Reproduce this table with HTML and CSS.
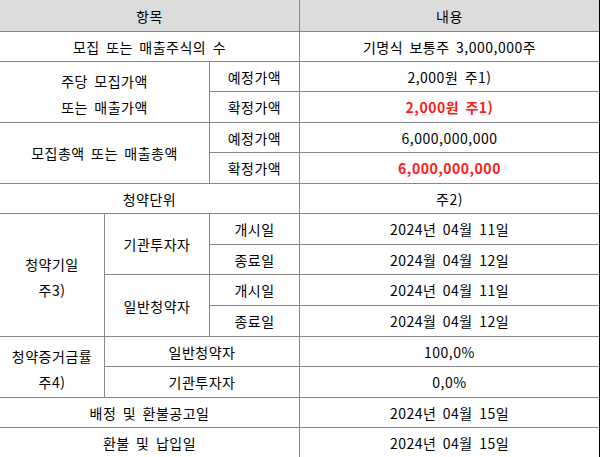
FILE: index.html
```html
<!DOCTYPE html>
<html lang="ko">
<head>
<meta charset="utf-8">
<link rel="stylesheet" href="styles.css">
</head>
<body>
<div class="sheet">
  <div class="c head s13">항목</div>
  <div class="c head">내용</div>

  <div class="c s13">모집 또는 매출주식의 수</div>
  <div class="c">기명식 보통주 3,000,000주</div>

  <div class="c s12 r2 multi">주당 모집가액<br>또는 매출가액</div>
  <div class="c">예정가액</div>
  <div class="c">2,000원 주1)</div>
  <div class="c">확정가액</div>
  <div class="c red">2,000원 주1)</div>

  <div class="c s12 r2">모집총액 또는 매출총액</div>
  <div class="c">예정가액</div>
  <div class="c">6,000,000,000</div>
  <div class="c">확정가액</div>
  <div class="c red">6,000,000,000</div>

  <div class="c s13">청약단위</div>
  <div class="c">주2)</div>

  <div class="c r4 multi">청약기일<br>주3)</div>
  <div class="c r2">기관투자자</div>
  <div class="c">개시일</div>
  <div class="c">2024년 04월 11일</div>
  <div class="c">종료일</div>
  <div class="c">2024월 04월 12일</div>
  <div class="c r2">일반청약자</div>
  <div class="c">개시일</div>
  <div class="c">2024년 04월 11일</div>
  <div class="c">종료일</div>
  <div class="c">2024월 04월 12일</div>

  <div class="c r2 multi">청약증거금률<br>주4)</div>
  <div class="c s23">일반청약자</div>
  <div class="c">100,0%</div>
  <div class="c s23">기관투자자</div>
  <div class="c">0,0%</div>

  <div class="c s13">배정 및 환불공고일</div>
  <div class="c">2024년 04월 15일</div>

  <div class="c s13">환불 및 납입일</div>
  <div class="c">2024년 04월 15일</div>
</div>
</body>
</html>
```

FILE: styles.css
```css
html, body {
  margin: 0;
  padding: 0;
  background: #fff;
}

.sheet {
  width: 599px;
  border-right: 1px solid #000;
  display: grid;
  grid-template-columns: 104px 104px 89px 299px;
  grid-template-rows: 31px 29px 29px 30px 29px 30px 29px 30px 29px 30px 30px 29px 30px 29px 30px;
  gap: 1px;
  background: #888;
  font-family: "Noto Sans CJK KR", "Noto Sans", sans-serif;
  font-size: 14px;
  letter-spacing: 0.5px;
  word-spacing: 2px;
  color: #000;
  overflow: hidden;
  height: 457px;
}

.c {
  background: #fff;
  display: flex;
  align-items: center;
  justify-content: center;
  text-align: center;
  white-space: nowrap;
  line-height: 16px;
}

.head {
  background: #dcdcdc;
}

.s13 { grid-column: 1 / 4; }
.s12 { grid-column: 1 / 3; }
.s23 { grid-column: 2 / 4; }
.r2 { grid-row: span 2; }
.r4 { grid-row: span 4; }

.multi {
  line-height: 26px;
  padding-top: 3px;
}

.red {
  color: #ff1a1a;
  font-weight: bold;
}
```
